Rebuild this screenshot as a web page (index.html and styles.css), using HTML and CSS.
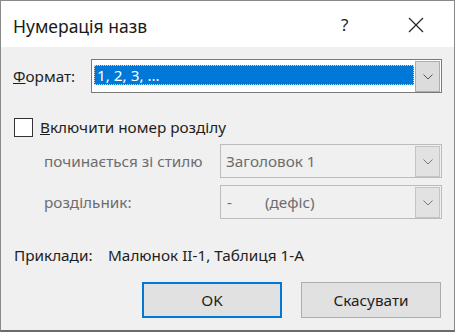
FILE: index.html
```html
<!DOCTYPE html>
<html lang="uk">
<head>
<meta charset="utf-8">
<link rel="stylesheet" href="styles.css">
</head>
<body>
<div class="window">
  <div class="titlebar">
    <div class="title">Нумерація назв</div>
    <div class="help">?</div>
    <div class="close">
      <svg width="16" height="16" viewBox="0 0 16 16"><path d="M1 1 L15 15 M15 1 L1 15" stroke="#222" stroke-width="1.2" fill="none"/></svg>
    </div>
  </div>
  <div class="content">
    <div class="row format-row">
      <div class="label"><u>Ф</u>ормат:</div>
      <div class="combo focused">
        <div class="value"><span class="sel">1, 2, 3, …</span></div>
        <div class="drop"><svg width="10" height="6" viewBox="0 0 10 6"><path d="M0.5 0.5 L5 5 L9.5 0.5" stroke="#555" stroke-width="1" fill="none"/></svg></div>
      </div>
    </div>
    <div class="row check-row">
      <div class="checkbox"></div>
      <div class="check-label"><u>В</u>ключити номер розділу</div>
    </div>
    <div class="row sub-row first">
      <div class="sub-label">починається зі стилю</div>
      <div class="combo disabled">
        <div class="value">Заголовок 1</div>
        <div class="drop"><svg width="10" height="6" viewBox="0 0 10 6"><path d="M0.5 0.5 L5 5 L9.5 0.5" stroke="#777" stroke-width="1" fill="none"/></svg></div>
      </div>
    </div>
    <div class="row sub-row second">
      <div class="sub-label">роздільник:</div>
      <div class="combo disabled">
        <div class="value"><span class="dash">-</span>(дефіс)</div>
        <div class="drop"><svg width="10" height="6" viewBox="0 0 10 6"><path d="M0.5 0.5 L5 5 L9.5 0.5" stroke="#777" stroke-width="1" fill="none"/></svg></div>
      </div>
    </div>
    <div class="row examples">
      <div class="ex-label">Приклади:</div>
      <div class="ex-value">Малюнок II-1, Таблиця 1-А</div>
    </div>
    <div class="row buttons">
      <div class="btn ok">OK</div>
      <div class="btn cancel">Скасувати</div>
    </div>
  </div>
</div>
</body>
</html>
```
FILE: styles.css
```css
html, body {
  margin: 0;
  padding: 0;
}
body {
  font-family: "Noto Sans", "Open Sans", sans-serif;
  font-size: 15px;
  color: #1e1e1e;
}
.window {
  width: 455px;
  height: 332px;
  box-sizing: border-box;
  border: 1px solid #8a8a8a;
  border-bottom: 2px solid #6a6a6a;
  background: #f0f0f0;
  display: flex;
  flex-direction: column;
}
.titlebar {
  height: 46px;
  background: #ffffff;
  display: flex;
  align-items: center;
}
.title {
  font-size: 17.5px;
  color: #1a1a1a;
  padding-left: 12px;
  flex: 1;
  margin-top: 3px;
}
.help {
  font-size: 17px;
  width: 20px;
  margin-right: 47px;
  color: #222;
  margin-top: 1px;
}
.close {
  width: 16px;
  height: 16px;
  margin-right: 30px;
  margin-top: 1px;
}
.close svg { display: block; }
.content {
  padding: 12px 12px 0 12px;
  display: flex;
  flex-direction: column;
}
.row {
  display: flex;
  align-items: center;
}
.label {
  width: 78px;
  font-size: 15.3px;
  color: #1e1e1e;
}
.combo {
  flex: 1;
  height: 34px;
  box-sizing: border-box;
  border: 1px solid #7a7a7a;
  background: #ffffff;
  display: flex;
  align-items: stretch;
}
.combo .value {
  flex: 1;
  display: flex;
  align-items: center;
  padding-left: 5px;
  font-size: 15.3px;
}
.combo.focused .value {
  padding: 5px 0 7px 2px;
  align-items: stretch;
}
.sel {
  flex: 1;
  background: #0078d7;
  color: #ffffff;
  display: flex;
  align-items: center;
  padding-left: 3px;
  outline: 1px dotted #c8d8e8;
  outline-offset: -1px;
}
.drop {
  width: 25px;
  margin: 1px 1px 0 1px;
  box-sizing: border-box;
  border: 1px solid #adadad;
  background: #dcdcdc;
  display: flex;
  align-items: center;
  justify-content: center;
}
.drop svg { display: block; }
.check-row {
  margin-top: 25px;
  height: 18px;
}
.checkbox {
  width: 19px;
  height: 19px;
  box-sizing: border-box;
  border: 1px solid #333;
  background: #fff;
  margin-left: 1px;
  margin-right: 7px;
}
.check-label {
  font-size: 15.3px;
}
.sub-row {
  padding-left: 31px;
}
.sub-row.first { margin-top: 8px; }
.sub-row.second { margin-top: 7px; }
.sub-label {
  width: 176px;
  font-size: 15.3px;
  color: #6d6d6d;
}
.combo.disabled {
  border-color: #bcbcbc;
  background: #f0f0f0;
}
.combo.disabled .value {
  color: #6d6d6d;
}
.combo.disabled .drop {
  border-color: #c4c4c4;
  background: #e2e2e2;
}
.dash {
  width: 38px;
  padding-left: 1px;
}
.examples {
  margin-top: 26px;
  height: 20px;
  font-size: 15.3px;
}
.ex-label {
  width: 94px;
  padding-left: 1px;
}
.buttons {
  margin-top: 17px;
  justify-content: flex-end;
  gap: 19px;
  padding-right: 1px;
}
.btn {
  width: 140px;
  height: 36px;
  box-sizing: border-box;
  background: #e1e1e1;
  border: 1px solid #adadad;
  display: flex;
  align-items: center;
  justify-content: center;
  font-size: 15.3px;
}
.btn.ok {
  border: 2px solid #0078d7;
}
```
